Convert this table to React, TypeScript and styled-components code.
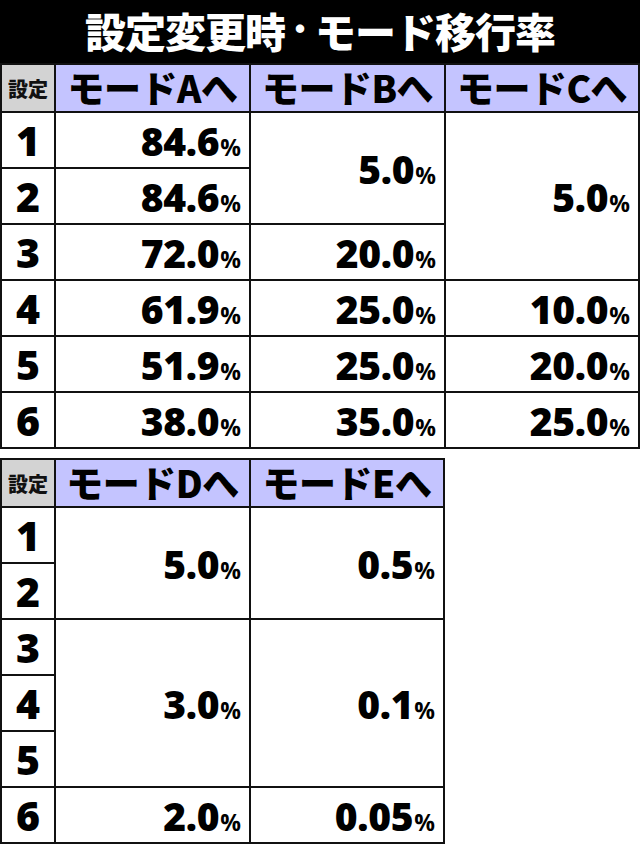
import React from "react";
import styled, { createGlobalStyle } from "styled-components";

const Global = createGlobalStyle`
  html, body { margin: 0; padding: 0; background: #fff; }
  body { font-family: "Noto Sans CJK JP", "Noto Sans", sans-serif; }
`;

const Page = styled.div`
  width: 640px;
  display: flex;
  flex-direction: column;
  background: #fff;
`;

const TitleBar = styled.div`
  height: 63px;
  background: #000;
  display: flex;
  align-items: center;
  justify-content: center;
`;

const TitleText = styled.h1`
  margin: 0;
  color: #fff;
  font-family: "Noto Sans CJK JP", sans-serif;
  font-weight: 900;
  font-size: 41px;
  line-height: 1;
  display: inline-flex;
  align-items: center;
  white-space: nowrap;
  padding-bottom: 2px;
  letter-spacing: -1px;
`;

const Dot = styled.span`
  font-size: 30px;
  letter-spacing: 0;
  line-height: 1;
  padding-bottom: 8px;
`;

const Grid = styled.div<{ $cols: string; $mt?: number }>`
  display: grid;
  grid-template-columns: ${(p) => p.$cols};
  grid-template-rows: 46px repeat(6, 54px);
  gap: 2px;
  padding: 2px;
  background: #111;
  width: max-content;
  margin-top: ${(p) => p.$mt ?? 0}px;
`;

const SetteiHead = styled.div`
  background: #d3d3d3;
  display: flex;
  align-items: center;
  justify-content: center;
  font-family: "Noto Sans CJK JP", sans-serif;
  font-weight: 900;
  font-size: 20px;
  color: #111;
`;

const ModeHead = styled.div`
  background: #c4c4ff;
  display: flex;
  align-items: center;
  justify-content: center;
  color: #000;
  padding-bottom: 2px;
`;

const ModeText = styled.span`
  display: inline-block;
  font-family: "Noto Sans CJK JP", sans-serif;
  font-weight: 900;
  font-size: 37px;
  line-height: 1;
  white-space: nowrap;
  letter-spacing: -0.5px;
`;

const Label = styled.div<{ $row: number }>`
  grid-row: ${(p) => p.$row};
  grid-column: 1;
  background: #fff;
  display: flex;
  align-items: center;
  justify-content: center;
  font-family: "Open Sans", "Noto Sans", sans-serif;
  font-weight: 800;
  font-size: 41px;
  color: #000;
  line-height: 1;
`;

const Value = styled.div<{ $row: string; $col: number }>`
  grid-row: ${(p) => p.$row};
  grid-column: ${(p) => p.$col};
  background: #fff;
  display: flex;
  align-items: baseline;
  justify-content: flex-end;
  padding-right: 8px;
  color: #000;
  line-height: 1;
  align-content: center;
  flex-wrap: wrap;
`;

const Num = styled.span`
  font-family: "Open Sans", "Noto Sans", sans-serif;
  font-weight: 800;
  font-size: 39px;
  letter-spacing: -0.3px;
`;

const Pct = styled.span`
  font-family: "Open Sans", "Noto Sans", sans-serif;
  font-weight: 700;
  font-size: 23px;
  margin-left: 1px;
`;

type Cell = { v: string; row: string; col: number };

const table1: Cell[] = [
  { v: "84.6", row: "2", col: 2 },
  { v: "84.6", row: "3", col: 2 },
  { v: "72.0", row: "4", col: 2 },
  { v: "61.9", row: "5", col: 2 },
  { v: "51.9", row: "6", col: 2 },
  { v: "38.0", row: "7", col: 2 },
  { v: "5.0", row: "2 / 4", col: 3 },
  { v: "20.0", row: "4", col: 3 },
  { v: "25.0", row: "5", col: 3 },
  { v: "25.0", row: "6", col: 3 },
  { v: "35.0", row: "7", col: 3 },
  { v: "5.0", row: "2 / 5", col: 4 },
  { v: "10.0", row: "5", col: 4 },
  { v: "20.0", row: "6", col: 4 },
  { v: "25.0", row: "7", col: 4 },
];

const table2: Cell[] = [
  { v: "5.0", row: "2 / 4", col: 2 },
  { v: "3.0", row: "4 / 7", col: 2 },
  { v: "2.0", row: "7", col: 2 },
  { v: "0.5", row: "2 / 4", col: 3 },
  { v: "0.1", row: "4 / 7", col: 3 },
  { v: "0.05", row: "7", col: 3 },
];

const settings = ["1", "2", "3", "4", "5", "6"];

function RateTable({
  modes,
  cells,
  cols,
  mt,
}: {
  modes: string[];
  cells: Cell[];
  cols: string;
  mt?: number;
}) {
  return (
    <Grid $cols={cols} $mt={mt}>
      <SetteiHead>設定</SetteiHead>
      {modes.map((m) => (
        <ModeHead key={m}>
          <ModeText>モード{m}へ</ModeText>
        </ModeHead>
      ))}
      {settings.map((s, i) => (
        <Label key={s} $row={i + 2}>
          {s}
        </Label>
      ))}
      {cells.map((c, i) => (
        <Value key={i} $row={c.row} $col={c.col}>
          <Num>{c.v}</Num>
          <Pct>%</Pct>
        </Value>
      ))}
    </Grid>
  );
}

export default function App() {
  return (
    <>
      <Global />
      <Page>
        <TitleBar>
          <TitleText>
            設定変更時<Dot>・</Dot>モード移行率
          </TitleText>
        </TitleBar>
        <RateTable modes={["A", "B", "C"]} cells={table1} cols="52px 193px 193px 192px" />
        <RateTable modes={["D", "E"]} cells={table2} cols="52px 193px 192px" mt={9} />
      </Page>
    </>
  );
}
